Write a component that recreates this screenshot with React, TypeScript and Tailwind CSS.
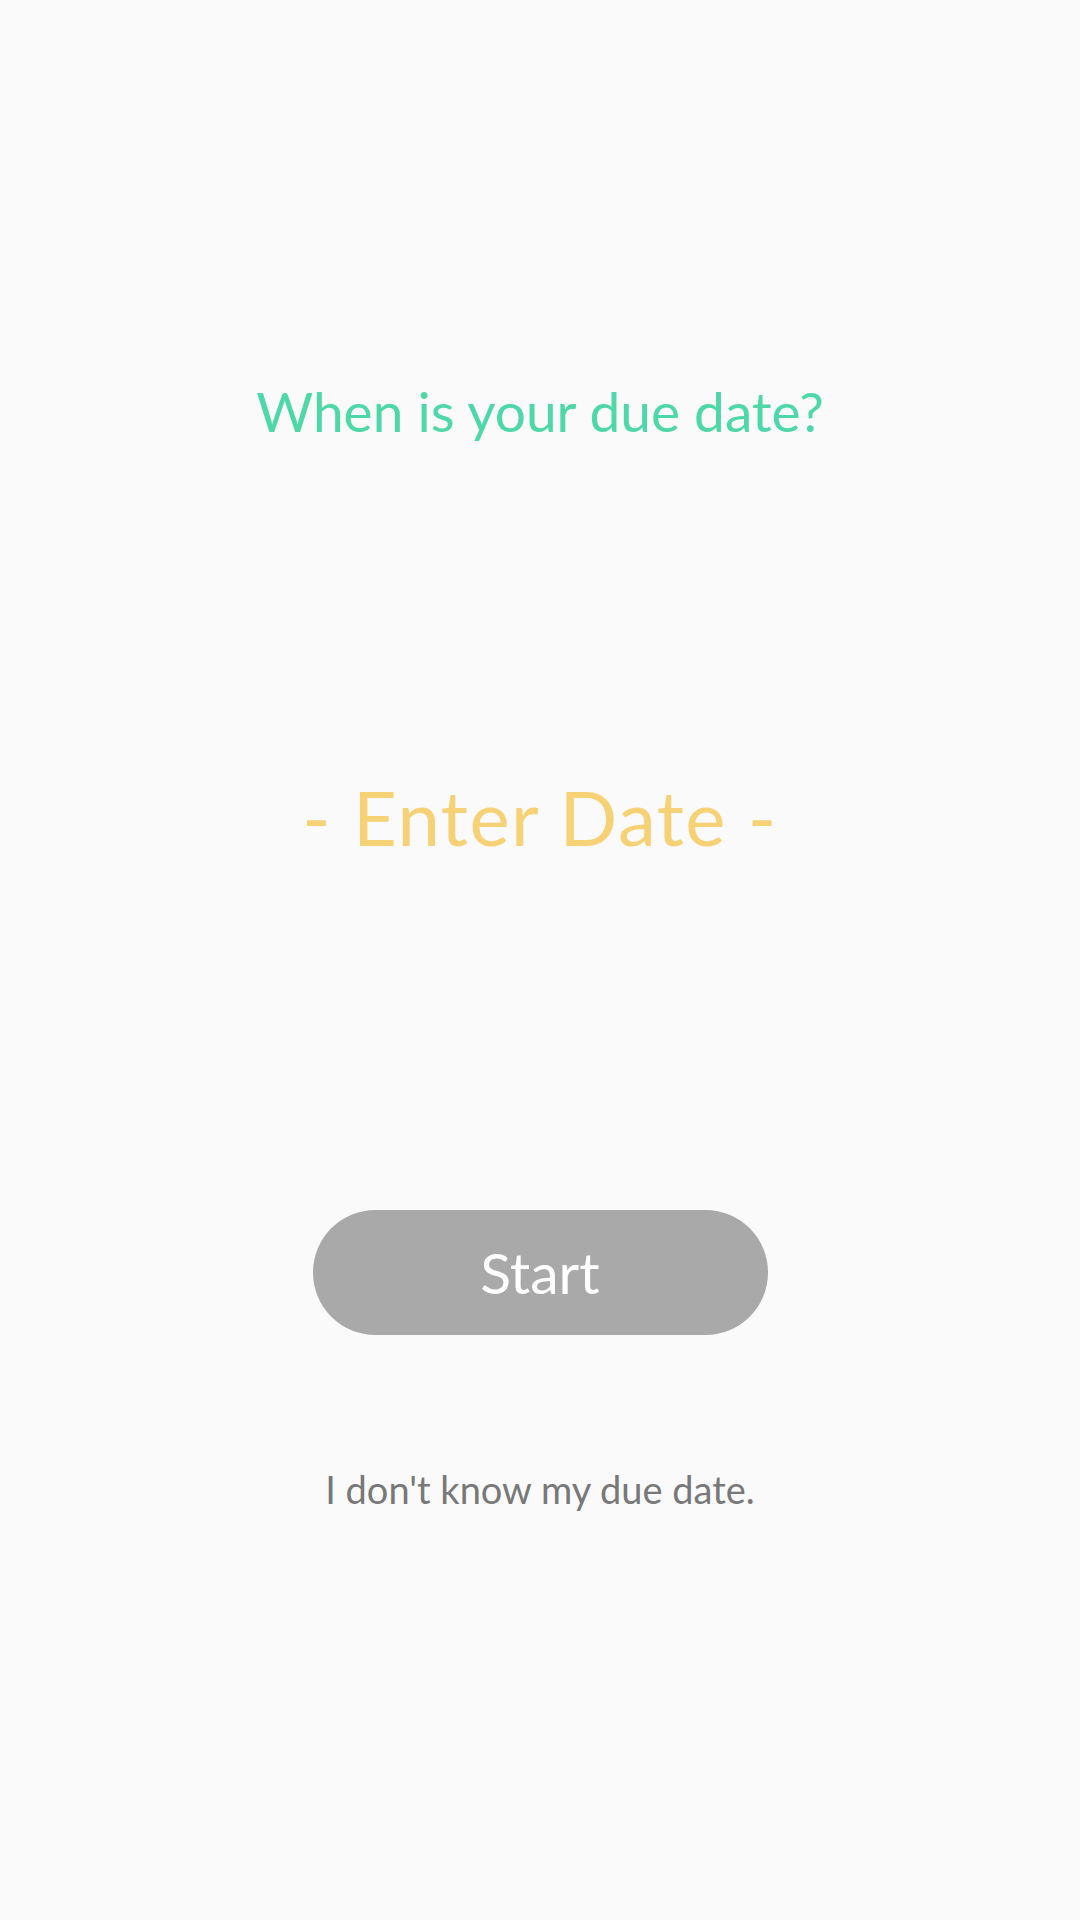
export default function App() {
  return (
    <div className="min-h-[1920px] w-full bg-[#fafafa] flex flex-col items-center" style={{ fontFamily: 'Lato, "Noto Sans", sans-serif' }}>
      {/* Question */}
      <h1 className="mt-[384px] text-[55px] leading-none font-normal text-[#4fd8a7]">
        When is your due date?
      </h1>

      {/* Date picker trigger */}
      <button className="mt-[340px] text-[76px] leading-none tracking-[0.02em] text-[#f7d175]">
        - Enter Date -
      </button>

      {/* Start */}
      <button className="mt-[355px] w-[455px] h-[125px] rounded-full bg-[#a9a9a9] text-white text-[57px] leading-none flex items-center justify-center">
        Start
      </button>

      <button className="mt-[135px] text-[38px] leading-none text-[#787878]">
        I don't know my due date.
      </button>
    </div>
  )
}
